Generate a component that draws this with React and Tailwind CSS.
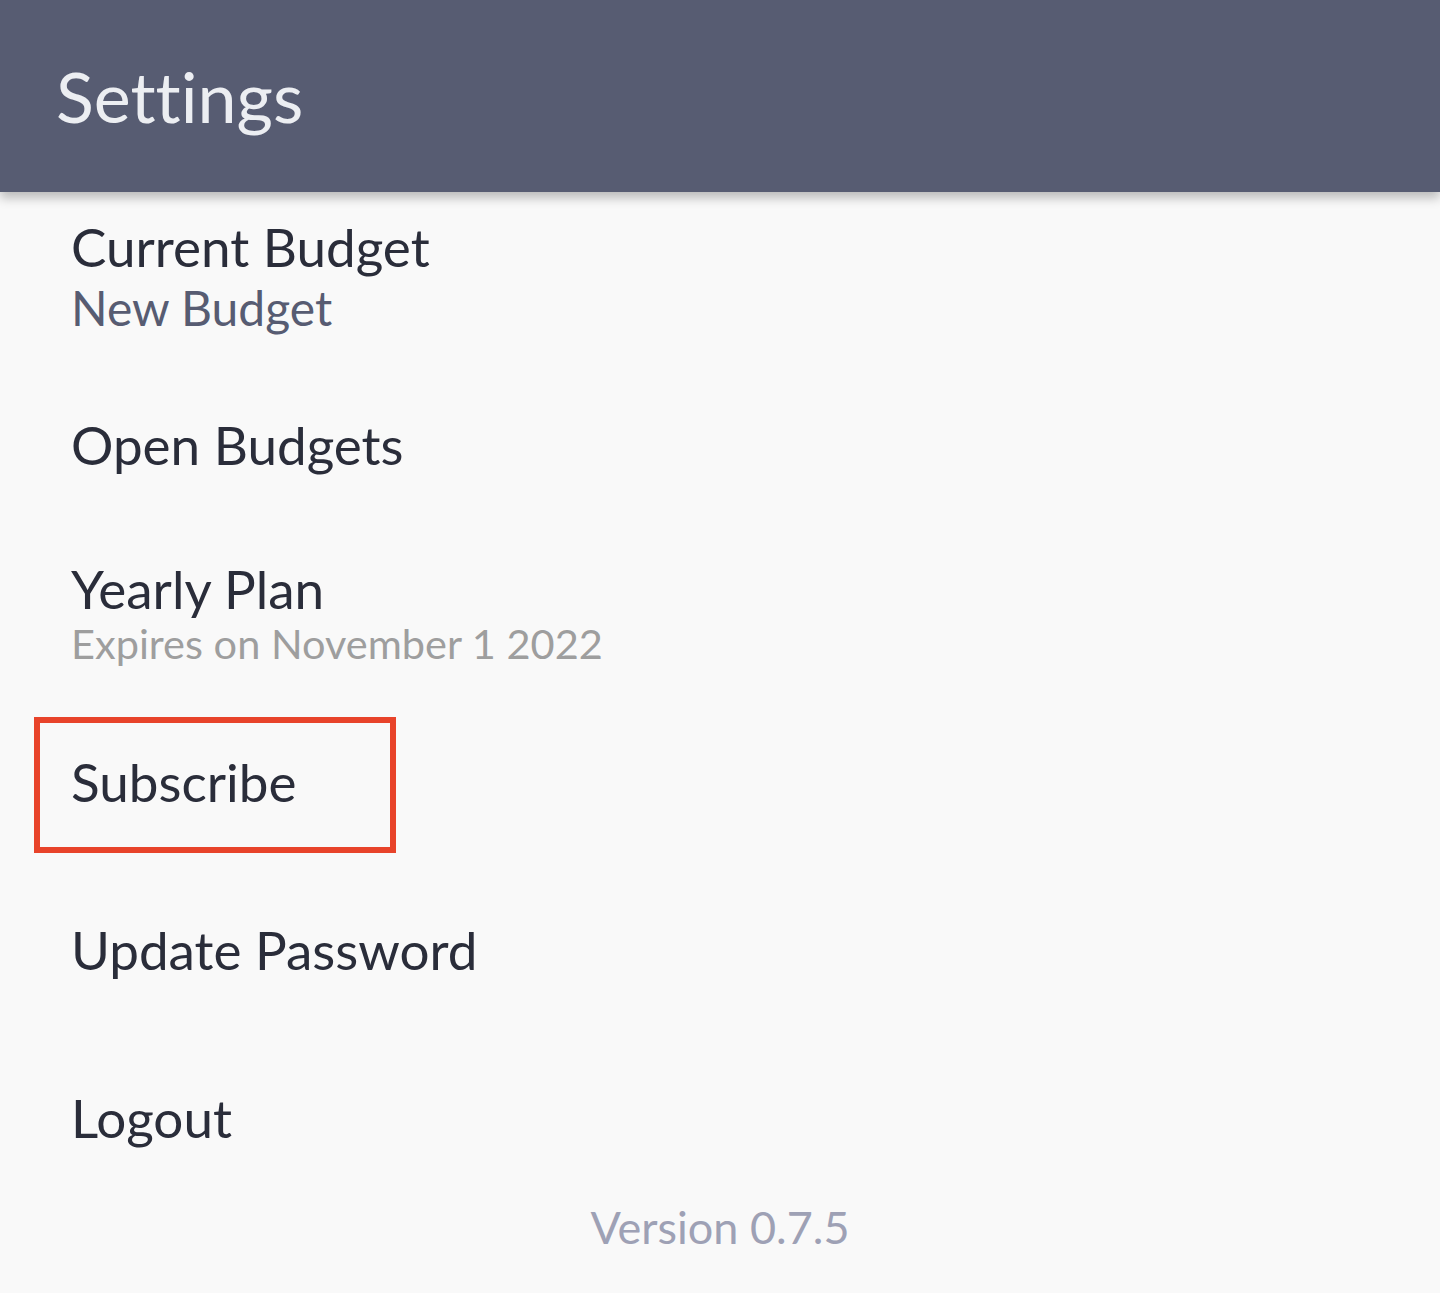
import React from 'react';

const font = { fontFamily: 'Lato, "Open Sans", sans-serif' };

const App = () => {
  return (
    <div className="min-h-[1293px] w-full bg-[#f9f9f9] [font-variant-ligatures:none]" style={font}>
      {/* header */}
      <div className="h-[192px] bg-[#575c72] shadow-[0_6px_10px_rgba(0,0,0,0.25)] pl-[56px] pt-[61px] relative z-10">
        <h1 className="text-[70px] leading-none text-[#eceef2]">Settings</h1>
      </div>

      <div className="flex flex-col">
        <div className="pl-[71px] mt-[28px]">
          <div className="text-[53px] leading-none text-[#2a2d3a]">Current Budget</div>
          <div className="text-[48px] leading-none text-[#575c72] mt-[11px]">New Budget</div>
        </div>

        <div className="pl-[71px] mt-[86px] text-[53px] leading-none text-[#2a2d3a]">Open Budgets</div>

        <div className="pl-[71px] mt-[91px]">
          <div className="text-[53px] leading-none text-[#2a2d3a]">Yearly Plan</div>
          <div className="text-[41.5px] leading-none text-[#9e9e9e] mt-[8px]">Expires on November 1 2022</div>
        </div>

        <div className="ml-[34px] mt-[52px] w-[362px] h-[136px] border-[6px] border-[#e8432a] pl-[31px] pt-[32px]">
          <div className="text-[53px] leading-none text-[#2a2d3a]">Subscribe</div>
        </div>

        <div className="pl-[71px] mt-[70px] text-[53px] leading-none text-[#2a2d3a]">Update Password</div>

        <div className="pl-[71px] mt-[115px] text-[53px] leading-none text-[#2a2d3a]">Logout</div>

        <div className="mt-[61px] text-center text-[45px] leading-none text-[#9ea1b5]">Version 0.7.5</div>
      </div>
    </div>
  );
};

export default App;
